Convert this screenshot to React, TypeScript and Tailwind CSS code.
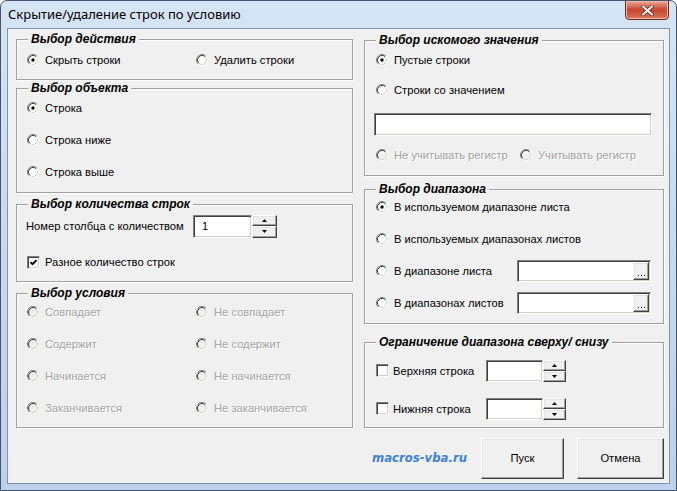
import React from "react";

const ui = "font-['Liberation_Sans',Arial,sans-serif] text-[11.2px] text-black";
const sunken = "bg-white border border-t-[#808080] border-l-[#808080] border-b-white border-r-white shadow-[inset_1px_1px_0_#404040,inset_-1px_-1px_0_#d4d0c8]";
const raised = "bg-[#f0f0f0] border border-t-white border-l-white border-r-[#404040] border-b-[#404040] shadow-[inset_-1px_-1px_0_#a0a0a0,inset_1px_1px_0_#e3e3e3]";
const dis = "text-[#a3a3a3] [text-shadow:1px_1px_0_#fff]";

function Radio({ checked, disabled }: { checked?: boolean; disabled?: boolean }) {
  return (
    <svg width="12" height="12" viewBox="0 0 12 12" className="shrink-0">
      <circle cx="6" cy="6" r="5" fill={disabled ? "#f0f0f0" : "#fff"} />
      <path d="M2.11 9.89A5.5 5.5 0 0 1 9.89 2.11" fill="none" stroke="#808080" />
      <path d="M9.89 2.11A5.5 5.5 0 0 1 2.11 9.89" fill="none" stroke="#fff" />
      <path d="M2.82 9.18A4.5 4.5 0 0 1 9.18 2.82" fill="none" stroke="#404040" />
      <path d="M9.18 2.82A4.5 4.5 0 0 1 2.82 9.18" fill="none" stroke="#d4d0c8" />
      {checked && <circle cx="6" cy="6" r="1.7" fill="#000" />}
    </svg>
  );
}

function Check({ checked }: { checked?: boolean }) {
  return (
    <span className={`w-[13px] h-[13px] shrink-0 flex items-center justify-center ${sunken}`}>
      {checked && (
        <svg width="7" height="7" viewBox="0 0 7 7">
          <path d="M0.5 3.2L2.5 5.2L6.5 1.2" fill="none" stroke="#000" strokeWidth="1.7" />
        </svg>
      )}
    </span>
  );
}

function Opt({ label, checked, disabled }: { label: string; checked?: boolean; disabled?: boolean }) {
  return (
    <div className="flex items-center gap-[6px] whitespace-nowrap">
      <Radio checked={checked} disabled={disabled} />
      <span className={disabled ? dis : ""}>{label}</span>
    </div>
  );
}

function Frame({ title, className, children }: { title: string; className: string; children?: React.ReactNode }) {
  return (
    <div className={`relative border border-[#a0a0a0] shadow-[inset_1px_1px_0_#fff,1px_1px_0_#fff] ${className}`}>
      <span className="absolute left-[11px] -top-[8px] px-[3px] bg-[#f0f0f0] leading-[14px] text-[12px] font-bold italic whitespace-nowrap">{title}</span>
      {children}
    </div>
  );
}

function Arrow({ up }: { up?: boolean }) {
  return (
    <svg width="5" height="3" viewBox="0 0 5 3">
      <path d={up ? "M2.5 0L5 3H0Z" : "M0 0H5L2.5 3Z"} fill="#000" />
    </svg>
  );
}

function Spin({ value, w, bw, h }: { value?: string; w: string; bw: string; h: string }) {
  return (
    <div className={`flex ${h}`}>
      <div className={`${w} h-full ${sunken} flex items-center pl-[8px]`}>{value}</div>
      <div className={`${bw} h-full flex flex-col`}>
        <div className={`flex-1 flex items-center justify-center ${raised}`}><Arrow up /></div>
        <div className={`flex-1 flex items-center justify-center ${raised}`}><Arrow /></div>
      </div>
    </div>
  );
}

function RefBox() {
  return (
    <div className={`w-[134px] h-[22px] flex justify-end ${sunken} p-[1px]`}>
      <div className={`w-[16px] h-full ${raised} flex items-end justify-center pb-[3px]`}>
        <svg width="7" height="1" viewBox="0 0 7 1"><path d="M0 0h1v1H0zM3 0h1v1H3zM6 0h1v1H6z" fill="#000" /></svg>
      </div>
    </div>
  );
}

function Btn({ label, w }: { label: string; w: string }) {
  return (
    <button className={`${w} h-[41px] ${raised} flex items-center justify-center`}>{label}</button>
  );
}

export default function App() {
  return (
    <div className="w-[677px] h-[491px] flex flex-col rounded-t-[7px] border border-[#44566b] bg-gradient-to-b from-[#d6e5f5] via-[#c6d9ef] to-[#bcd1eb] overflow-hidden">
      <div className="h-[27px] flex justify-between shrink-0">
        <span className="pl-[7px] pt-[5px] font-['Noto_Sans',sans-serif] text-[13px] text-black leading-[17px]">Скрытие/удаление строк по условию</span>
        <div className="mr-[7px] w-[44px] h-[20px] -mt-[1px] rounded-b-[4px] border border-[#6b2a20] bg-gradient-to-b from-[#eaa898] via-[#c8452b] to-[#d9765a] flex items-center justify-center shadow-[inset_0_0_0_1px_#f0b8a8]">
          <svg width="13" height="11" viewBox="0 0 13 11">
            <path d="M2 1.5L11 9.5M11 1.5L2 9.5" stroke="#5a1d12" strokeWidth="3.6" strokeLinecap="round" />
            <path d="M2 1.5L11 9.5M11 1.5L2 9.5" stroke="#fff" strokeWidth="2.2" strokeLinecap="round" />
          </svg>
        </div>
      </div>
      <div className={`flex-1 mx-[6px] mb-[6px] border border-[#7f93ab] bg-[#f0f0f0] flex gap-[11px] pl-[8px] pt-[10px] ${ui}`}>
        {/* left column */}
        <div className="w-[337px] flex flex-col">
          <Frame title="Выбор действия" className="h-[41px] pl-[10px] pt-[4px]">
            <div className="grid grid-cols-[169px_1fr] h-[32px] items-center">
              <Opt label="Скрыть строки" checked />
              <Opt label="Удалить строки" />
            </div>
          </Frame>
          <Frame title="Выбор объекта" className="mt-[8px] h-[105px] pl-[10px] pt-[3px]">
            <div className="h-[32px] flex items-center"><Opt label="Строка" checked /></div>
            <div className="h-[32px] flex items-center"><Opt label="Строка ниже" /></div>
            <div className="h-[32px] flex items-center"><Opt label="Строка выше" /></div>
          </Frame>
          <Frame title="Выбор количества строк" className="mt-[11px] h-[78px] pl-[9px] pt-[9px]">
            <div className="h-[24px] flex items-center">
              <span className="w-[167px]">Номер столбца с количеством</span>
              <Spin value="1" w="w-[59px]" bw="w-[25px]" h="h-[23px]" />
            </div>
            <div className="h-[24px] mt-[12px] flex items-center gap-[5px] pl-[1px]">
              <Check checked />
              <span>Разное количество строк</span>
            </div>
          </Frame>
          <Frame title="Выбор условия" className="mt-[11px] h-[135px] pl-[10px] pt-[2px]">
            {[
              ["Совпадает", "Не совпадает"],
              ["Содержит", "Не содержит"],
              ["Начинается", "Не начинается"],
              ["Заканчивается", "Не заканчивается"],
            ].map(([a, b]) => (
              <div key={a} className="grid grid-cols-[169px_1fr] h-[32px] items-center">
                <Opt label={a} disabled />
                <Opt label={b} disabled />
              </div>
            ))}
          </Frame>
        </div>

        {/* right column */}
        <div className="w-[300px] flex flex-col mt-[1px]">
          <Frame title="Выбор искомого значения" className="h-[136px] pl-[11px] pt-[7px]">
            <div className="h-[24px] flex items-center"><Opt label="Пустые строки" checked /></div>
            <div className="h-[24px] mt-[6px] flex items-center"><Opt label="Строки со значением" /></div>
            <div className={`h-[23px] w-[278px] -ml-[2px] mt-[11px] ${sunken}`} />
            <div className="grid grid-cols-[144px_1fr] h-[24px] mt-[7px] items-center">
              <Opt label="Не учитывать регистр" disabled />
              <Opt label="Учитывать регистр" disabled />
            </div>
          </Frame>
          <Frame title="Выбор диапазона" className="mt-[13px] h-[135px] pl-[11px] pt-[1px]">
            <div className="h-[32px] flex items-center"><Opt label="В используемом диапазоне листа" checked /></div>
            <div className="h-[32px] flex items-center"><Opt label="В используемых диапазонах листов" /></div>
            <div className="h-[32px] flex items-center">
              <div className="w-[141px]"><Opt label="В диапазоне листа" /></div>
              <RefBox />
            </div>
            <div className="h-[32px] flex items-center">
              <div className="w-[141px]"><Opt label="В диапазонах листов" /></div>
              <RefBox />
            </div>
          </Frame>
          <Frame title="Ограничение диапазона сверху/ снизу" className="mt-[18px] h-[86px] pl-[11px] pt-[16px]">
            <div className="h-[24px] flex items-center">
              <div className="w-[110px] flex items-center gap-[4px]"><Check /><span>Верхняя строка</span></div>
              <Spin w="w-[57px]" bw="w-[23px]" h="h-[22px]" />
            </div>
            <div className="h-[24px] mt-[14px] flex items-center">
              <div className="w-[110px] flex items-center gap-[4px]"><Check /><span>Нижняя строка</span></div>
              <Spin w="w-[57px]" bw="w-[23px]" h="h-[22px]" />
            </div>
          </Frame>
          <div className="mt-[10px] flex items-center">
            <span className="w-[117px] pl-[8px] font-['DejaVu_Sans',Verdana,sans-serif] text-[11.7px] font-bold italic text-[#3f80d9]">macros-vba.ru</span>
            <Btn label="Пуск" w="w-[83px]" />
            <div className="w-[13px]" />
            <Btn label="Отмена" w="w-[87px]" />
          </div>
        </div>
      </div>
    </div>
  );
}
